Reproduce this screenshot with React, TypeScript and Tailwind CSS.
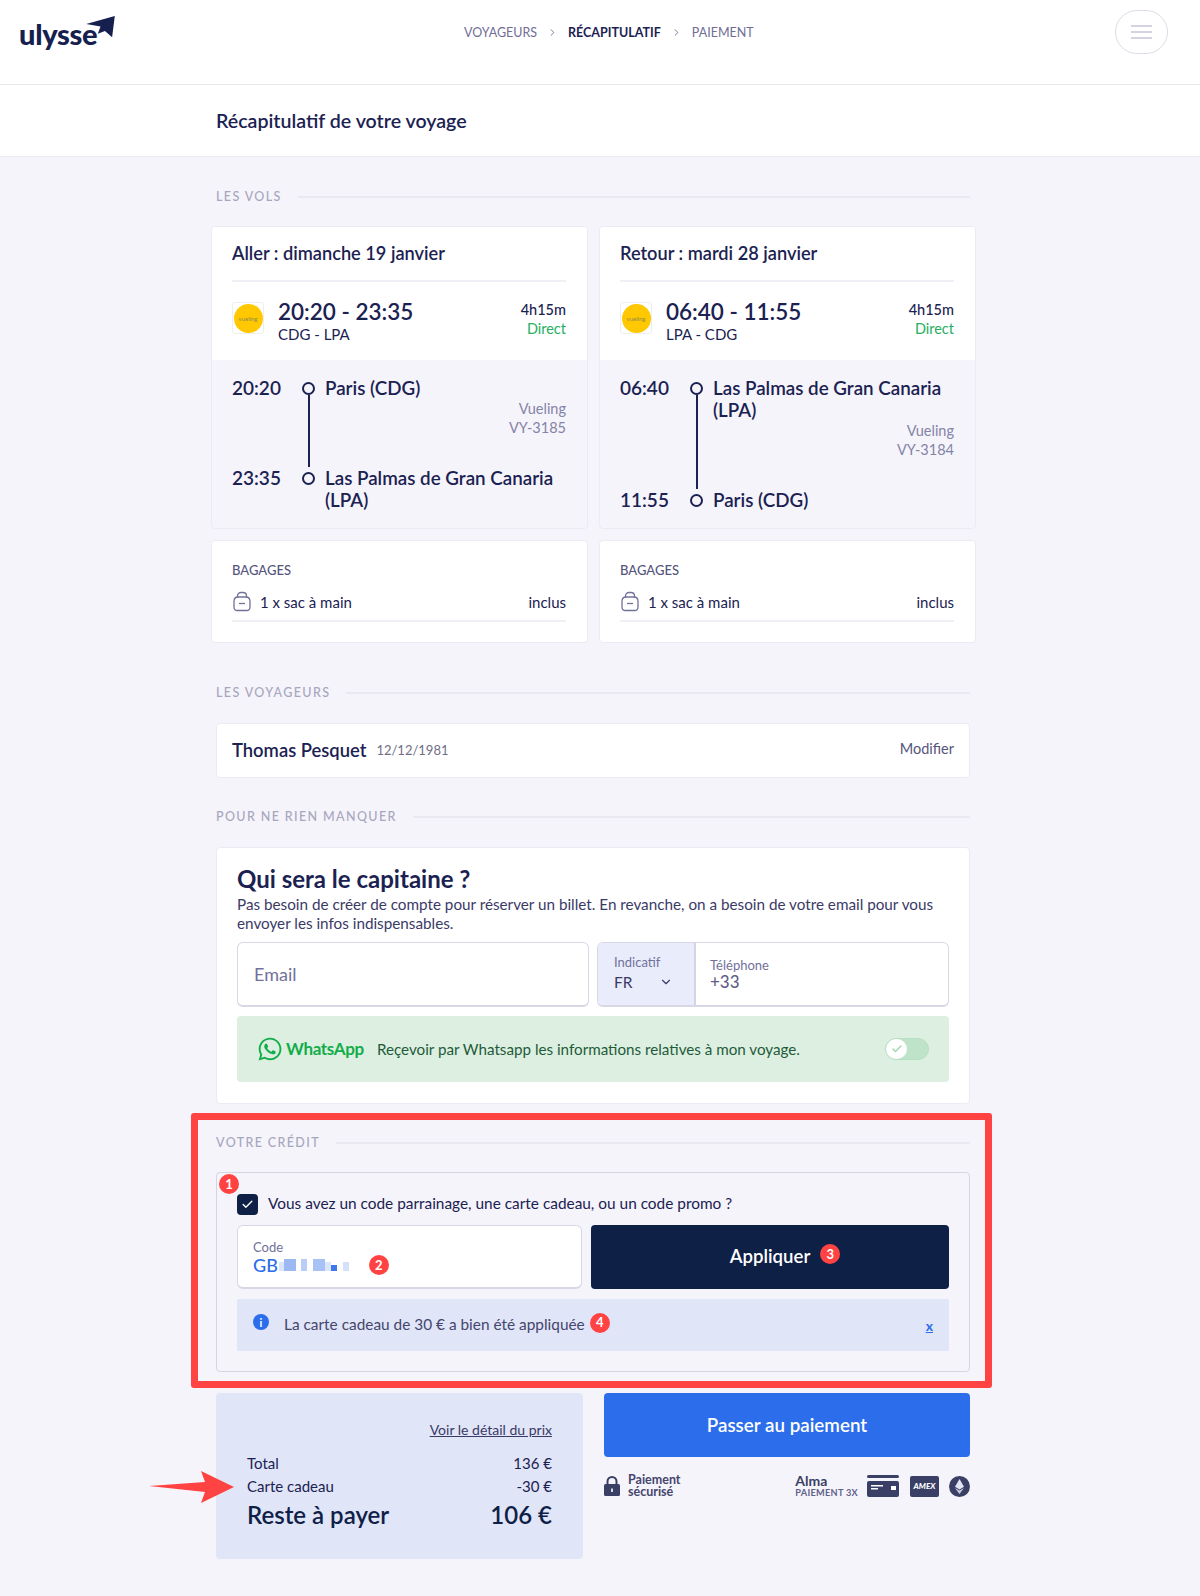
import { Check, ChevronDown, ChevronRight } from 'lucide-react';
import { FaWhatsapp } from 'react-icons/fa';

function SectionLabel({ children }: { children: string }) {
    return (
        <div className="flex h-4 items-center gap-4">
            <span className="text-[12.500px] leading-4 font-medium tracking-[0.11em] text-[#a7a6bf]">{children}</span>
            <div className="h-[2px] flex-1 bg-[#eae9f1]"></div>
        </div>
    );
}

function Badge({ n, className = '' }: { n: number; className?: string }) {
    return (
        <span className={`flex h-5 w-5 shrink-0 items-center justify-center rounded-full bg-[#ff4343] text-[13px] leading-none font-bold text-white ${className}`}>
            {n}
        </span>
    );
}

function BagIcon() {
    return (
        <svg width="20" height="21" viewBox="0 0 20 21" fill="none" stroke="#72719a" strokeWidth="1.3" className="shrink-0">
            <path d="M2 10.5C2 7.5 4 6 6 6h8c2 0 4 1.500 4 4.500V16c0 2-1.300 3.500-3.300 3.500H5.300C3.300 19.500 2 18 2 16z" />
            <path d="M5.500 6.500V5c0-2 1.500-3.500 3.500-3.500h2c2 0 3.500 1.500 3.500 3.500v1.500" />
            <path d="M7 12.500h6" />
        </svg>
    );
}

function Stop({ time, place, last }: { time: string; place: string; last?: boolean }) {
    return (
        <div className="flex">
            <div className="w-[70px] shrink-0 text-[19px] leading-[22px] font-semibold text-[#1b2252]">{time}</div>
            <div className="flex w-[13px] shrink-0 flex-col items-center pt-[5px]">
                <div className="h-[13px] w-[13px] shrink-0 rounded-full border-2 border-[#1b2252]"></div>
                {!last && <div className="w-[2px] flex-1 bg-[#1b2252] -mb-[1px]"></div>}
            </div>
            <div className="ml-[10px] text-[18.800px] leading-[22px] font-semibold text-[#1b2252]">{place}</div>
        </div>
    );
}

function FlightColumn(props: {
    title: string;
    hours: string;
    route: string;
    depTime: string;
    depPlace: string;
    arrTime: string;
    arrPlace: string;
    flight: string;
}) {
    return (
        <div className="w-[377px]">
            <div className="overflow-hidden rounded-[4px] border border-[#ecebf3]">
                <div className="h-[133px] bg-white pr-[21px] pl-[20px]">
                    <div className="flex h-[55px] items-center border-b-2 border-[#f0eff5] text-[18.200px] font-semibold text-[#1b2252]">{props.title}</div>
                    <div className="mt-[20px] flex">
                        <div className="flex h-[32px] w-[32px] items-center justify-center rounded-[3px] border border-[#eeeeee]">
                            <div className="flex h-[29px] w-[29px] items-center justify-center rounded-full bg-[#ffc800] text-[6px] text-[#8f8a50]">vueling</div>
                        </div>
                        <div className="ml-[14px]">
                            <div className="-mt-[4px] text-[22.500px] leading-[27px] font-semibold text-[#1b2252]">{props.hours}</div>
                            <div className="-mt-[1px] text-[15px] leading-[20px] text-[#1b2252]">{props.route}</div>
                        </div>
                        <div className="ml-auto text-right text-[14.500px] leading-[19px]">
                            <div className="-mt-[2px] font-medium text-[#1b2252]">4h15m</div>
                            <div className="text-[#27ae60]">Direct</div>
                        </div>
                    </div>
                </div>
                <div className="h-[168px] pt-[17px] pr-[21px] pl-[20px]">
                    <Stop time={props.depTime} place={props.depPlace} />
                    <div className="flex">
                        <div className="ml-[76px] w-[2px] bg-[#1b2252]"></div>
                        <div className="flex-1 pb-[30px] text-right text-[14.500px] leading-[19px] text-[#8483a8]">
                            <div>Vueling</div>
                            <div>{props.flight}</div>
                        </div>
                    </div>
                    <Stop time={props.arrTime} place={props.arrPlace} last />
                </div>
            </div>
            <div className="mt-[11px] h-[103px] rounded-[4px] border border-[#ecebf3] bg-white pt-[20px] pr-[21px] pl-[20px]">
                <div className="text-[13px] leading-[18px] font-medium text-[#55547c]">BAGAGES</div>
                <div className="mt-[12px] flex items-center border-b-2 border-[#f0eff5] pb-[8px] text-[15px] leading-[20px] text-[#1b2252]">
                    <BagIcon />
                    <span className="ml-[8px]">1 x sac à main</span>
                    <span className="ml-auto">inclus</span>
                </div>
            </div>
        </div>
    );
}

export default function App() {
    return (
        <main className="relative min-h-[1596px] bg-[#f5f4fa] font-['Lato',sans-serif] text-[#1b2252]">
            {/* HEADER */}
            <header className="flex h-[85px] items-start border-b border-[#e8e8ee] bg-white">
                <div className="relative ml-[19px] w-[445px] shrink-0">
                    <span className="absolute top-[14px] left-0 text-[29px] leading-[40px] font-black tracking-[-0.01em] text-[#16204f]">ulysse</span>
                    <svg width="29" height="25" viewBox="0 0 32 28" className="absolute top-[15px] left-[67px]">
                        <path d="M0 10 L32 1 L29 25 L21 18 L13 21 L16 13 Z" fill="#16204f" />
                    </svg>
                </div>
                <nav className="mt-[24px] flex h-[17px] items-center text-[12.500px] leading-[17px] text-[#6f6e95]">
                    <span>VOYAGEURS</span>
                    <ChevronRight className="mx-[10px] h-[11px] w-[11px]" />
                    <span className="font-bold text-[#1b2252]">RÉCAPITULATIF</span>
                    <ChevronRight className="mx-[10px] h-[11px] w-[11px]" />
                    <span>PAIEMENT</span>
                </nav>
                <button className="mt-[10px] mr-[32px] ml-auto flex h-[44px] w-[53px] flex-col items-center justify-center gap-[4px] rounded-[22px] border border-[#dddce8]">
                    <span className="h-[2px] w-[21px] bg-[#d5d3e3]"></span>
                    <span className="h-[2px] w-[21px] bg-[#d5d3e3]"></span>
                    <span className="h-[2px] w-[21px] bg-[#d5d3e3]"></span>
                </button>
            </header>

            <div className="flex h-[72px] items-center border-b border-[#ebeaf1] bg-white pl-[216px] text-[19.600px] font-semibold text-[#1b2252]">
                Récapitulatif de votre voyage
            </div>

            <div className="ml-[216px] w-[754px] pt-[32px]">
                {/* LES VOLS */}
                <SectionLabel>LES VOLS</SectionLabel>
                <div className="mt-[21px] -ml-[5px] flex w-[765px] justify-between">
                    <FlightColumn
                        title="Aller : dimanche 19 janvier"
                        hours="20:20 - 23:35"
                        route="CDG - LPA"
                        depTime="20:20"
                        depPlace="Paris (CDG)"
                        arrTime="23:35"
                        arrPlace="Las Palmas de Gran Canaria (LPA)"
                        flight="VY-3185"
                    />
                    <FlightColumn
                        title="Retour : mardi 28 janvier"
                        hours="06:40 - 11:55"
                        route="LPA - CDG"
                        depTime="06:40"
                        depPlace="Las Palmas de Gran Canaria (LPA)"
                        arrTime="11:55"
                        arrPlace="Paris (CDG)"
                        flight="VY-3184"
                    />
                </div>

                {/* LES VOYAGEURS */}
                <div className="mt-[42px]">
                    <SectionLabel>LES VOYAGEURS</SectionLabel>
                </div>
                <div className="mt-[22px] flex h-[55px] items-center rounded-[4px] border border-[#ecebf3] bg-white px-[15px]">
                    <span className="text-[18.400px] font-semibold">Thomas Pesquet</span>
                    <span className="ml-[10px] text-[13px] text-[#6f6e85]">12/12/1981</span>
                    <span className="mb-[4px] ml-auto text-[14.500px] text-[#55547c]">Modifier</span>
                </div>

                {/* POUR NE RIEN MANQUER */}
                <div className="mt-[31px]">
                    <SectionLabel>POUR NE RIEN MANQUER</SectionLabel>
                </div>
                <div className="mt-[22px] h-[257px] rounded-[4px] border border-[#ecebf3] bg-white px-[20px] pt-[17px]">
                    <h2 className="text-[24px] leading-[28px] font-bold">Qui sera le capitaine ?</h2>
                    <p className="mt-[2px] text-[15.250px] leading-[18.500px] text-[#3a3a66]">
                        Pas besoin de créer de compte pour réserver un billet. En revanche, on a besoin de votre email pour vous envoyer les infos indispensables.
                    </p>
                    <div className="mt-[10px] flex justify-between">
                        <div className="flex h-[65px] w-[352px] items-center rounded-[6px] border border-b-2 border-[#d8d7e5] bg-white px-[16px] text-[18px] text-[#72719a]">Email</div>
                        <div className="flex h-[65px] w-[352px] overflow-hidden rounded-[6px] border border-b-2 border-[#d8d7e5]">
                            <div className="w-[98px] border-r-2 border-[#d5d4e3] bg-[#e9edfb] pt-[11px] pr-[21px] pl-[16px]">
                                <div className="text-[13px] leading-[16px] text-[#72719a]">Indicatif</div>
                                <div className="mt-[2px] flex items-center justify-between text-[15.500px] leading-[20px] text-[#3a3a66]">
                                    FR
                                    <ChevronDown className="h-[14px] w-[14px]" />
                                </div>
                            </div>
                            <div className="px-[14px] pt-[15px]">
                                <div className="text-[13px] leading-[14px] text-[#72719a]">Téléphone</div>
                                <div className="text-[17px] leading-[19px] font-medium text-[#5f5e88]">+33</div>
                            </div>
                        </div>
                    </div>
                    <div className="mt-[9px] flex h-[66px] items-center rounded-[4px] bg-[#ddefe1] pr-[20px] pl-[20px]">
                        <FaWhatsapp className="h-[26px] w-[26px] text-[#12ad4b]" />
                        <span className="ml-[3px] text-[17px] font-bold tracking-[-0.02em] text-[#12ad4b]">WhatsApp</span>
                        <span className="ml-[13px] text-[15.200px] text-[#1d5b3a]">Reçevoir par Whatsapp les informations relatives à mon voyage.</span>
                        <div className="ml-auto flex h-[22px] w-[44px] items-center rounded-full border border-[#b6e0c3] bg-[#bfe3c9]">
                            <div className="flex h-[20px] w-[21px] items-center justify-center rounded-full bg-white">
                                <Check className="h-[12px] w-[12px] text-[#a3d8b4]" strokeWidth={3} />
                            </div>
                        </div>
                    </div>
                </div>

                {/* VOTRE CREDIT */}
                <section className="relative mt-[31px]">
                    <div className="pointer-events-none absolute -top-[22px] -right-[22px] -bottom-[16px] -left-[25px] z-10 rounded-[3px] border-[7px] border-[#ff4343]"></div>
                    <SectionLabel>VOTRE CRÉDIT</SectionLabel>
                    <div className="relative mt-[21px] h-[200px] rounded-[4px] border border-[#d5d4e0] px-[20px] pt-[20px]">
                        <Badge n={1} className="absolute top-[1px] left-[2px]" />
                        <div className="flex items-center">
                            <div className="flex h-[21px] w-[21px] items-center justify-center rounded-[4px] bg-[#0f2047]">
                                <Check className="h-[13px] w-[13px] text-white" strokeWidth={2.500} />
                            </div>
                            <span className="ml-[10px] pb-[1px] text-[15.400px] leading-[21px]">Vous avez un code parrainage, une carte cadeau, ou un code promo ?</span>
                        </div>
                        <div className="mt-[10px] flex justify-between">
                            <div className="h-[64px] w-[345px] rounded-[6px] border border-b-2 border-[#d8d7e5] bg-white px-[15px] pt-[14px]">
                                <div className="text-[13px] leading-[15px] text-[#72719a]">Code</div>
                                <div className="flex h-[20px] items-center text-[18px] font-medium text-[#2c6deb]">
                                    GB
                                    <svg width="78" height="12" viewBox="0 0 78 12" className="ml-[1px]">
                                        <rect x="0" y="3" width="5" height="9" fill="#dbe6fb" />
                                        <rect x="5" y="0" width="12" height="12" fill="#9db9f3" />
                                        <rect x="22" y="0" width="6" height="12" fill="#b9cdf6" />
                                        <rect x="34" y="0" width="12" height="12" fill="#a8c2f5" />
                                        <rect x="46" y="3" width="6" height="9" fill="#dbe6fb" />
                                        <rect x="52" y="6" width="6" height="6" fill="#3f78e8" />
                                        <rect x="64" y="3" width="6" height="9" fill="#d5e1fa" />
                                    </svg>
                                    <Badge n={2} className="ml-[12px]" />
                                </div>
                            </div>
                            <button className="flex h-[64px] w-[358px] items-center justify-center rounded-[4px] bg-[#0f2047] text-[18.600px] font-semibold text-white">
                                <span className="relative">
                                    Appliquer
                                    <Badge n={3} className="absolute top-[1px] -right-[30px]" />
                                </span>
                            </button>
                        </div>
                        <div className="mt-[10px] flex h-[52px] items-center rounded-[2px] bg-[#e0e5f7] pr-[16px] pl-[16px]">
                            <div className="mb-[6px] flex h-[16px] w-[16px] items-center justify-center rounded-full bg-[#2c6deb] text-[11px] leading-none font-bold text-white">i</div>
                            <span className="ml-[15px] text-[15.400px] text-[#45456e]">La carte cadeau de 30 € a bien été appliquée</span>
                            <Badge n={4} className="mb-[5px] ml-[5px]" />
                            <span className="ml-auto text-[14px] font-bold text-[#2c6deb] underline">x</span>
                        </div>
                    </div>
                </section>

                {/* PRIX + PAIEMENT */}
                <div className="mt-[21px] flex justify-between">
                    <div className="relative h-[166px] w-[367px] rounded-[4px] bg-[#e0e5f7] px-[31px] pt-[28px]">
                        <svg width="86" height="32" viewBox="0 0 86 32" className="absolute top-[78px] -left-[67px]">
                            <polygon points="0,15 56,11 52,0 85,16 52,32 56,21" fill="#ff4343" />
                        </svg>
                        <div className="text-right text-[14px] leading-[18px] text-[#3a3a66] underline">Voir le détail du prix</div>
                        <div className="mt-[13px] flex justify-between text-[15px] leading-[22.500px]">
                            <span>Total</span>
                            <span>136 €</span>
                        </div>
                        <div className="flex justify-between text-[15px] leading-[22.500px]">
                            <span>Carte cadeau</span>
                            <span>-30 €</span>
                        </div>
                        <div className="mt-[3px] flex justify-between text-[24px] leading-[30px] font-semibold text-[#0f2047]">
                            <span>Reste à payer</span>
                            <span>106 €</span>
                        </div>
                    </div>
                    <div className="w-[366px]">
                        <button className="flex h-[64px] w-full items-center justify-center rounded-[4px] bg-[#2c6deb] text-[18.800px] font-semibold text-white">
                            Passer au paiement
                        </button>
                        <div className="mt-[17px] flex items-center">
                            <svg width="16" height="20" viewBox="0 0 16 20" className="shrink-0">
                                <path d="M3.500 9V5.500a4.500 4.500 0 0 1 9 0V9" fill="none" stroke="#3a3f66" strokeWidth="2" />
                                <rect x="0" y="8" width="16" height="12" rx="1.500" fill="#3a3f66" />
                                <rect x="7.200" y="12.500" width="1.600" height="3.500" fill="#ffffff" />
                            </svg>
                            <div className="ml-[8px] text-[12.500px] leading-[12px] font-bold text-[#45456e]">
                                <div>Paiement</div>
                                <div>sécurisé</div>
                            </div>
                            <div className="ml-auto text-[#3a3f66]">
                                <div className="text-[14px] leading-[13px] font-bold">Alma</div>
                                <div className="text-[9.200px] leading-[11px] font-bold tracking-[0.03em] text-[#62618a]">PAIEMENT 3X</div>
                            </div>
                            <svg width="32" height="22" viewBox="0 0 32 22" className="ml-[9px] shrink-0">
                                <rect x="0" y="0" width="32" height="3" rx="1.500" fill="#3a3f66" />
                                <rect x="0" y="6" width="32" height="16" rx="2" fill="#3a3f66" />
                                <rect x="4" y="10" width="12" height="1.500" fill="#ffffff" />
                                <rect x="4" y="13" width="7" height="1.500" fill="#ffffff" />
                                <rect x="24" y="11" width="5" height="4" fill="#ffffff" />
                            </svg>
                            <div className="ml-[11px] flex h-[21px] w-[29px] items-center justify-center rounded-[2px] bg-[#3a3f66] text-[8px] font-black text-white italic">AMEX</div>
                            <svg width="21" height="21" viewBox="0 0 21 21" className="ml-[10px] shrink-0">
                                <circle cx="10.500" cy="10.500" r="10.500" fill="#3a3f66" />
                                <polygon points="10.500,3 15,10.800 10.500,13.500 6,10.800" fill="#e3e5f2" />
                                <polygon points="6,11.900 10.500,14.600 15,11.900 10.500,18" fill="#c7cae0" />
                            </svg>
                        </div>
                    </div>
                </div>
            </div>
        </main>
    );
}
